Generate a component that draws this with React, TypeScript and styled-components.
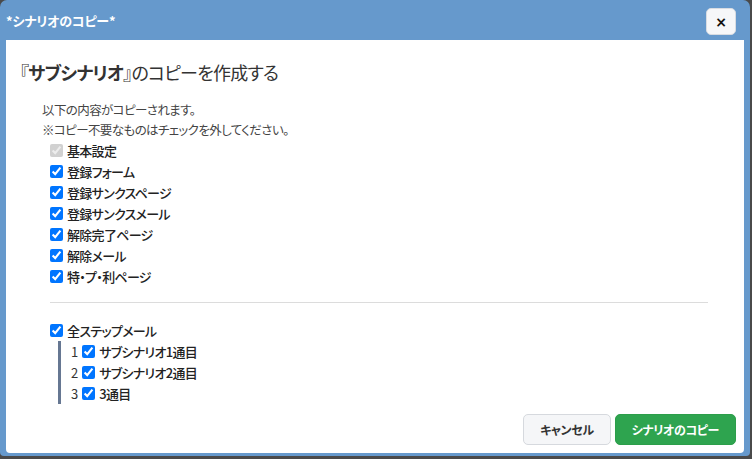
import React from "react";
import styled, { createGlobalStyle } from "styled-components";

const Global = createGlobalStyle`
  html, body { margin: 0; padding: 0; }
  body {
    background: #4a4a4a;
    width: 752px;
    height: 459px;
    overflow: hidden;
    font-family: "Noto Sans CJK JP", "Noto Sans", sans-serif;
    font-feature-settings: "palt";
  }
`;

const Dialog = styled.div`
  width: 750px;
  height: 456px;
  background: #6699cc;
  border-radius: 7px 7px 4px 4px;
  display: flex;
  flex-direction: column;
  box-sizing: border-box;
`;

const TitleBar = styled.div`
  height: 40px;
  flex: none;
  display: flex;
  justify-content: space-between;
  align-items: flex-start;
  padding: 0 14px 0 6px;
`;

const Title = styled.div`
  color: #fff;
  font-weight: 700;
  font-size: 13px;
  line-height: 16px;
  margin-top: 13px;
  letter-spacing: -0.2px;
`;

const CloseButton = styled.button`
  margin-top: 8px;
  width: 30px;
  height: 27px;
  background: #f6f7f9;
  border: 1px solid #d8dce2;
  border-radius: 5px;
  display: flex;
  align-items: center;
  justify-content: center;
  padding: 0;
  color: #111;
  font-family: "DejaVu Sans", sans-serif;
  font-size: 14px;
  font-weight: 700;
  line-height: 1;
`;

const Body = styled.div`
  flex: 1;
  margin: 0 6px 3px 6px;
  background: #fff;
  border-radius: 0 0 4px 4px;
  display: flex;
  flex-direction: column;
  padding: 20px 8px 8px 14px;
`;

const Heading = styled.h1`
  margin: 0;
  font-size: 18px;
  line-height: 24px;
  font-weight: 400;
  color: #333;
  letter-spacing: -0.8px;
`;

const Strong = styled.b`
  font-weight: 700;
`;

const Section = styled.div`
  margin: 16px 0 0 22px;
  padding-right: 28px;
`;

const Desc = styled.div`
  font-size: 12.5px;
  line-height: 20px;
  color: #444;
  letter-spacing: -0.6px;
`;

const List = styled.div`
  padding-left: 8px;
  display: flex;
  flex-direction: column;
`;

const Row = styled.label`
  display: flex;
  align-items: center;
  height: 21px;
  gap: 4px;
  font-size: 13px;
  font-weight: 500;
  color: #222;
  letter-spacing: -0.7px;
`;

const Check = styled.input.attrs({ type: "checkbox" })`
  width: 13px;
  height: 13px;
  margin: 0;
  flex: none;
`;

const Divider = styled.hr`
  border: none;
  border-top: 1px solid #dcdcdc;
  margin: 15px 0 17px 8px;
  height: 0;
`;

const SubList = styled.div`
  margin-left: 16px;
  border-left: 3px solid #667792;
  padding-left: 10px;
  display: flex;
  flex-direction: column;
`;

const Num = styled.span`
  font-weight: 400;
  color: #333;
  letter-spacing: 0;
`;

const Footer = styled.div`
  margin-top: auto;
  display: flex;
  justify-content: flex-end;
  gap: 4px;
`;

const Button = styled.button<{ $primary?: boolean }>`
  height: 31px;
  padding: 0 16px;
  border-radius: 5px;
  font-family: inherit;
  font-feature-settings: "palt";
  font-size: 12px;
  letter-spacing: -0.4px;
  font-weight: 700;
  border: 1px solid ${(p) => (p.$primary ? "#2c9e4a" : "#d6d9de")};
  background: ${(p) => (p.$primary ? "#2ea44f" : "#f5f6f8")};
  color: ${(p) => (p.$primary ? "#fff" : "#333")};
`;

const items = [
  "登録フォーム",
  "登録サンクスページ",
  "登録サンクスメール",
  "解除完了ページ",
  "解除メール",
  "特・プ・利ページ",
];

const steps = ["サブシナリオ1通目", "サブシナリオ2通目", "3通目"];

export default function App() {
  return (
    <>
      <Global />
      <Dialog>
        <TitleBar>
          <Title>*シナリオのコピー*</Title>
          <CloseButton aria-label="close">×</CloseButton>
        </TitleBar>
        <Body>
          <Heading>
            『<Strong>サブシナリオ</Strong>』のコピーを作成する
          </Heading>
          <Section>
            <Desc>以下の内容がコピーされます。</Desc>
            <Desc>※コピー不要なものはチェックを外してください。</Desc>
            <List>
              <Row>
                <Check defaultChecked disabled />
                基本設定
              </Row>
              {items.map((t) => (
                <Row key={t}>
                  <Check defaultChecked />
                  {t}
                </Row>
              ))}
            </List>
            <Divider />
            <List>
              <Row>
                <Check defaultChecked />
                全ステップメール
              </Row>
            </List>
            <SubList>
              {steps.map((s, i) => (
                <Row key={s}>
                  <Num>{i + 1}</Num>
                  <Check defaultChecked />
                  {s}
                </Row>
              ))}
            </SubList>
          </Section>
          <Footer>
            <Button>キャンセル</Button>
            <Button $primary>シナリオのコピー</Button>
          </Footer>
        </Body>
      </Dialog>
    </>
  );
}
